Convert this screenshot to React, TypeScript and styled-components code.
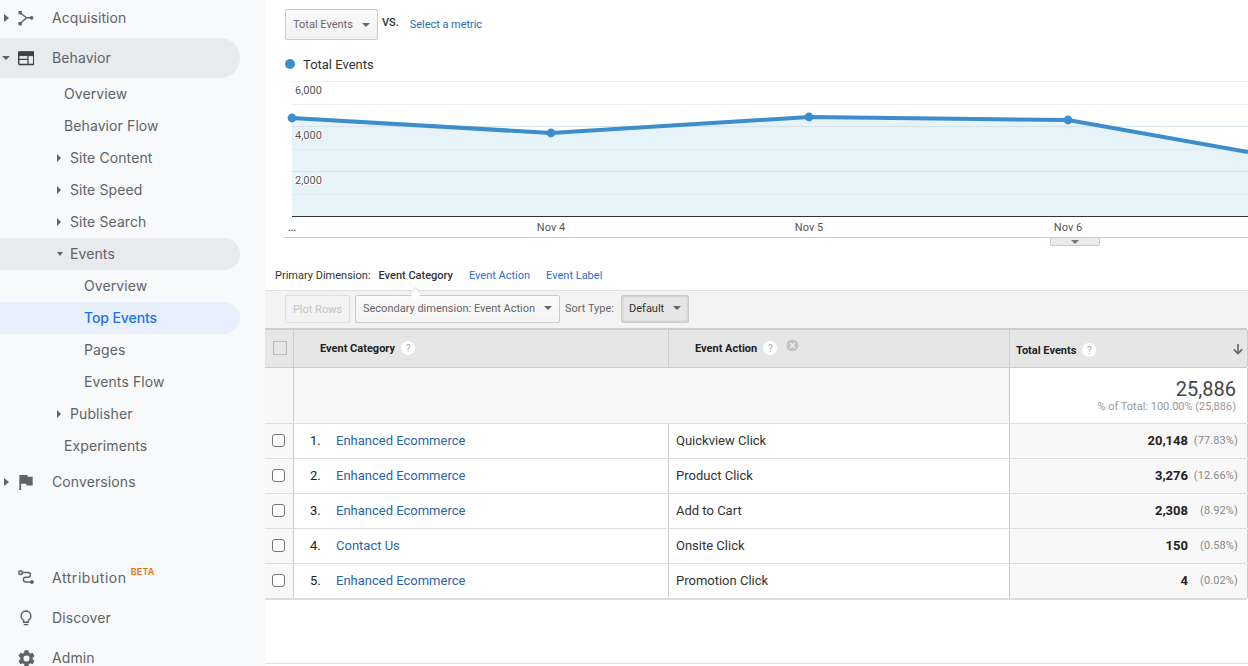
import React from "react";
import styled, { createGlobalStyle } from "styled-components";

const Global = createGlobalStyle`
  html, body { margin: 0; padding: 0; height: 100%; overflow: hidden; background: #fff; }
  body { font-family: Roboto, "Liberation Sans", sans-serif; }
  #root { height: 100%; }
`;

const Page = styled.div`
  display: flex;
  width: 1248px;
  height: 666px;
  overflow: hidden;
`;

const Sidebar = styled.nav`
  width: 265px;
  flex: none;
  background: #f8f9fa;
  display: flex;
  flex-direction: column;
  overflow: hidden;
`;

const NavList = styled.div`
  display: flex;
  flex-direction: column;
  margin-top: -2px;
  width: 240px;
`;

const FooterList = styled(NavList)`
  margin-top: 56px;
`;

const TopRow = styled.div<{ $active?: boolean }>`
  height: 40px;
  flex: none;
  display: flex;
  align-items: center;
  border-radius: ${(p) => (p.$active ? "0 20px 20px 0" : "0")};
  background: ${(p) => (p.$active ? "#e8eaed" : "transparent")};
  font-family: Inter, Roboto, sans-serif;
  font-size: 14px;
  color: #5f6368;
`;

const NavText = styled.span<{ $spacing?: number }>`
  margin-top: -2px;
  letter-spacing: ${(p) => p.$spacing ?? 0.1}px;
`;

const CaretSlot = styled.span`
  width: 18px;
  flex: none;
  display: flex;
  justify-content: center;
  padding-right: 6px;
  box-sizing: border-box;
`;

const Caret = styled.span<{ $open?: boolean; $small?: boolean; $wide?: boolean }>`
  width: 0;
  height: 0;
  border-style: solid;
  border-color: transparent;
  ${(p) =>
    p.$open
      ? `border-width: 4px ${p.$wide ? "4px" : "3.5px"} 0; border-top-color: #5f6368;`
      : `border-width: ${p.$small ? "4px 0 4px 4px" : "4px 0 4px 5px"}; border-left-color: #5f6368;`}
`;

const IconSlot = styled.span`
  width: 34px;
  flex: none;
  display: flex;
  align-items: center;
`;

const Beta = styled.span`
  align-self: flex-start;
  margin: 8px 0 0 4px;
  font-family: Inter, Roboto, sans-serif;
  font-size: 9px;
  line-height: 11px;
  font-weight: 600;
  color: #e8710a;
  letter-spacing: 0.2px;
`;

const SubRow = styled.div<{ $indent: number; $active?: boolean; $current?: boolean }>`
  height: 32px;
  flex: none;
  display: flex;
  align-items: center;
  padding-left: ${(p) => p.$indent}px;
  border-radius: ${(p) => (p.$active || p.$current ? "0 16px 16px 0" : "0")};
  background: ${(p) => (p.$current ? "#e8f0fe" : p.$active ? "#e8eaed" : "transparent")};
  font-family: Inter, Roboto, sans-serif;
  font-size: 14px;
  font-weight: ${(p) => (p.$current ? 500 : 400)};
  color: ${(p) => (p.$current ? "#1a73e8" : "#5f6368")};
`;

const SubCaret = styled.span`
  width: 13px;
  flex: none;
  display: flex;
`;

const Main = styled.main`
  flex: 1;
  min-width: 0;
  display: flex;
  flex-direction: column;
  position: relative;
`;

const MetricBar = styled.div`
  display: flex;
  align-items: center;
  padding: 9px 0 0 20px;
  height: 31px;
`;

const MetricSelect = styled.div`
  width: 93px;
  height: 31px;
  box-sizing: border-box;
  border: 1px solid #ccc;
  border-radius: 2px;
  background: linear-gradient(#fbfbfb, #f1f1f1);
  display: flex;
  align-items: center;
  justify-content: space-between;
  padding: 0 7px;
  font-size: 11px;
  color: #666;
`;

const Vs = styled.span`
  margin: -4px 0 0 4px;
  font-size: 11px;
  font-weight: 500;
  color: #333;
`;

const MetricLink = styled.a`
  margin-left: 11px;
  font-size: 11px;
  letter-spacing: -0.05px;
  color: #2a6bb0;
`;

const DownArrow = styled.span<{ $color?: string }>`
  flex: none;
  width: 0;
  height: 0;
  border-style: solid;
  border-width: 4px 4px 0 4px;
  border-color: ${(p) => p.$color || "#666"} transparent transparent transparent;
`;

const Legend = styled.div`
  display: flex;
  align-items: center;
  gap: 8px;
  margin: 16px 0 0 20px;
  height: 16px;
  font-size: 13px;
  color: #333;
`;

const LegendDot = styled.span`
  width: 10px;
  height: 10px;
  border-radius: 50%;
  background: #3b8ecb;
`;

const ChartWrap = styled.div`
  margin: 9px 0 0 19px;
  height: 156px;
  border-bottom: 1px solid #ccc;
  position: relative;
`;

const ChartSvg = styled.svg`
  display: block;
  width: 964px;
  height: 156px;
  font-family: Roboto, sans-serif;
`;

const ChartHandle = styled.div`
  position: absolute;
  left: 766px;
  bottom: -9px;
  width: 50px;
  height: 8px;
  box-sizing: border-box;
  background: #eaeaea;
  border: 1px solid #ccc;
  border-top: none;
  border-radius: 0 0 2px 2px;
  display: flex;
  justify-content: center;
  align-items: center;
`;

const DimensionBar = styled.div`
  display: flex;
  align-items: center;
  height: 53px;
  padding: 23px 0 1px 10px;
  box-sizing: border-box;
  font-size: 11px;
  color: #333;
  border-bottom: 1px solid #e0e0e0;
  position: relative;
`;

const DimLabel = styled.span`
  margin-right: 8px;
`;

const DimCurrent = styled.span`
  font-weight: 500;
  margin-right: 16px;
  color: #333;
  position: relative;
  &::after {
    content: "";
    position: absolute;
    left: 32px;
    top: 20px;
    width: 8px;
    height: 8px;
    background: #fff;
    border-left: 1px solid #ddd;
    border-top: 1px solid #ddd;
    transform: rotate(45deg);
  }
`;

const DimLink = styled.a`
  margin-right: 16px;
  color: #2a6dd6;
`;

const Toolbar = styled.div`
  height: 37px;
  background: #f3f3f3;
  display: flex;
  align-items: center;
  padding: 0 0 1px 20px;
  box-sizing: border-box;
  font-size: 11px;
  color: #666;
`;

const PlotButton = styled.div`
  width: 65px;
  height: 28px;
  box-sizing: border-box;
  border: 1px solid #e0e0e0;
  border-radius: 2px;
  display: flex;
  align-items: center;
  justify-content: center;
  color: #c4c4c4;
  margin-right: 5px;
`;

const ToolSelect = styled.div<{ $pressed?: boolean }>`
  height: 28px;
  width: ${(p) => (p.$pressed ? "68px" : "205px")};
  box-sizing: border-box;
  border: 1px solid #ccc;
  border-radius: 2px;
  background: ${(p) => (p.$pressed ? "#e6e6e6" : "linear-gradient(#fbfbfb,#f3f3f3)")};
  box-shadow: ${(p) => (p.$pressed ? "inset 0 0 3px rgba(0,0,0,.2)" : "none")};
  display: flex;
  align-items: center;
  justify-content: space-between;
  padding: 0 7px 2px;
  color: ${(p) => (p.$pressed ? "#333" : "#666")};
`;

const SortLabel = styled.span`
  width: 49px;
  margin: -2px 7px 0 5px;
  white-space: nowrap;
`;

const Table = styled.div`
  display: flex;
  flex-direction: column;
  font-size: 13px;
  color: #333;
  width: 982px;
  border-bottom: 1px solid #ddd;
`;

const Row = styled.div<{ $h: number; $head?: boolean }>`
  display: grid;
  grid-template-columns: 29px 375px 341px 238px;
  height: ${(p) => p.$h}px;
  box-sizing: border-box;
  background: ${(p) => (p.$head ? "#e6e6e6" : "#fff")};
  border-top: ${(p) => (p.$head ? "2px solid #ccc" : "none")};
  border-bottom: 1px solid ${(p) => (p.$head ? "#ccc" : "#ddd")};
`;

const Cell = styled.div<{ $shade?: boolean; $span?: number }>`
  display: flex;
  align-items: center;
  box-sizing: border-box;
  padding-bottom: 1px;
  border-right: 1px solid #ccc;
  background: ${(p) => (p.$shade ? "#f8f8f8" : "transparent")};
  grid-column: ${(p) => (p.$span ? `span ${p.$span}` : "auto")};
  min-width: 0;
`;

const CheckCell = styled(Cell)`
  padding: 0 0 2px 7px;
`;

const HeadCheck = styled.span`
  width: 12px;
  height: 12px;
  margin-left: 1px;
  border: 1px solid #bbb;
  background: #e6e6e6;
`;

const RowCheck = styled.span`
  width: 11px;
  height: 11px;
  border: 1px solid #767676;
  border-radius: 3px;
  background: #fff;
`;

const HeadCell = styled(Cell)<{ $pad: number; $low?: boolean }>`
  padding-left: ${(p) => p.$pad}px;
  padding-top: ${(p) => (p.$low ? 4 : 0)}px;
  font-size: 11px;
  font-weight: 700;
  color: #222;
`;

const Help = styled.span`
  width: 14px;
  height: 14px;
  border-radius: 50%;
  background: #fff;
  color: #aaa;
  font-size: 10px;
  font-weight: 400;
  display: inline-flex;
  align-items: center;
  justify-content: center;
  margin-left: 6px;
`;

const RemoveIcon = styled.svg`
  width: 13px;
  height: 13px;
  margin: -6px 0 0 9px;
`;

const SortArrow = styled.svg`
  width: 12px;
  height: 12px;
  margin: -3px 3px 0 auto;
`;

const SummaryCell = styled(Cell)`
  flex-direction: column;
  align-items: flex-end;
  justify-content: center;
  padding-right: 11px;
`;

const SummaryValue = styled.div`
  font-size: 20px;
  line-height: 22px;
  color: #444;
`;

const SummaryNote = styled.div`
  font-size: 11px;
  line-height: 13px;
  color: #999;
`;

const DataCell = styled(Cell)`
  padding-left: 7px;
`;

const RankCell = styled(Cell)`
  padding-left: 16px;
`;

const Rank = styled.span`
  width: 26px;
  flex: none;
  color: #222;
`;

const RowLink = styled.a`
  color: #2a66a6;
`;

const ValueCell = styled(Cell)`
  justify-content: flex-end;
  padding-right: 9px;
`;

const Value = styled.b`
  font-weight: 700;
  color: #222;
`;

const Percent = styled.span`
  width: 50px;
  text-align: right;
  font-size: 11px;
  letter-spacing: 0.12px;
  color: #888;
`;

const TailRule = styled.div`
  position: absolute;
  left: 0;
  right: 0;
  bottom: 2px;
  border-bottom: 1px solid #e0e0e0;
`;

const ico = { width: 16, height: 16, viewBox: "0 0 16 16" };

const AcquisitionIcon = () => (
  <svg {...ico} fill="#5f6368" stroke="none">
    <rect x="0.5" y="1" width="3.4" height="3.4" />
    <rect x="0.5" y="12" width="3.4" height="3.4" />
    <circle cx="13.6" cy="7.8" r="1.9" />
    <path d="M2 2.7 L8.5 7.8 L2 13.7 M8.5 7.8 H12" fill="none" stroke="#5f6368" strokeWidth="1.4" />
  </svg>
);

const BehaviorIcon = () => (
  <svg {...ico} fill="none" stroke="#3c4043">
    <rect x="0.7" y="2" width="15" height="12.5" rx="1.2" strokeWidth="1.4" />
    <rect x="0.7" y="2" width="15" height="3.6" fill="#3c4043" strokeWidth="1" />
    <path d="M1 9.4 H10 V14 M10 5.6 V14" strokeWidth="1.2" />
  </svg>
);

const FlagIcon = () => (
  <svg width="16" height="16" viewBox="4 3 17 18" fill="#5f6368">
    <path d="M14.4 6 14 4H5v17h2v-7h5.6l.4 2h7V6z" />
  </svg>
);

const AttributionIcon = () => (
  <svg {...ico} fill="none" stroke="#5f6368" strokeWidth="1.5">
    <circle cx="2.6" cy="2.6" r="1.8" />
    <path d="M4.4 2.6 H10 Q12.4 2.6 12.4 4.9 Q12.4 7.2 10 7.2 H7.5 Q5.4 7.2 5.4 9.6 Q5.4 12 7.5 12 H13" />
    <circle cx="14" cy="12" r="1.9" fill="#5f6368" stroke="none" />
  </svg>
);

const BulbIcon = () => (
  <svg {...ico} fill="none" stroke="#5f6368" strokeWidth="1.4">
    <path d="M8 1 A5 5 0 0 0 5.6 10.3 V12.2 H10.4 V10.3 A5 5 0 0 0 8 1 Z" />
    <path d="M5.8 14.6 H10.2" />
  </svg>
);

const GearIcon = () => (
  <svg width="17" height="17" viewBox="2 2 20 20" fill="#5f6368">
    <path d="M19.14 12.94c.04-.3.06-.61.06-.94 0-.32-.02-.64-.07-.94l2.03-1.58a.49.49 0 0 0 .12-.61l-1.92-3.32a.49.49 0 0 0-.59-.22l-2.39.96c-.5-.38-1.03-.7-1.62-.94l-.36-2.54a.48.48 0 0 0-.48-.41h-3.84a.47.47 0 0 0-.47.41l-.36 2.54c-.59.24-1.13.57-1.62.94l-2.39-.96a.48.48 0 0 0-.59.22L2.74 8.87c-.12.21-.08.47.12.61l2.03 1.58c-.05.3-.09.63-.09.94s.02.64.07.94l-2.03 1.58a.49.49 0 0 0-.12.61l1.92 3.32c.12.22.37.29.59.22l2.39-.96c.5.38 1.03.7 1.62.94l.36 2.54c.05.24.24.41.48.41h3.84c.24 0 .44-.17.47-.41l.36-2.54c.59-.24 1.13-.56 1.62-.94l2.39.96c.22.08.47 0 .59-.22l1.92-3.32a.47.47 0 0 0-.12-.61l-2.01-1.58zM12 15.6A3.6 3.6 0 1 1 12 8.4a3.6 3.6 0 0 1 0 7.2z" />
  </svg>
);

const Top = ({
  label,
  icon,
  caret,
  active,
  spacing,
  children,
}: {
  label: string;
  icon: React.ReactNode;
  caret?: "open" | "closed";
  active?: boolean;
  spacing?: number;
  children?: React.ReactNode;
}) => (
  <TopRow $active={active}>
    <CaretSlot>{caret && <Caret $open={caret === "open"} $wide />}</CaretSlot>
    <IconSlot>{icon}</IconSlot>
    <NavText $spacing={spacing}>{label}</NavText>
    {children}
  </TopRow>
);

const Leaf = ({ label, indent, current }: { label: string; indent: number; current?: boolean }) => (
  <SubRow $indent={indent} $current={current}>
    <NavText $spacing={current ? -0.1 : 0.1}>{label}</NavText>
  </SubRow>
);

const Branch = ({ label, open, active }: { label: string; open?: boolean; active?: boolean }) => (
  <SubRow $indent={57} $active={active}>
    <SubCaret>
      <Caret $open={open} $small={!open} />
    </SubCaret>
    <NavText>{label}</NavText>
  </SubRow>
);

const Chart = () => {
  const line = "M8 37 L267 52 L525 36 L784 39 L964 71";
  return (
    <ChartSvg viewBox="0 0 964 156">
      <path d={`${line} V135 H8 Z`} fill="#e6f3f9" />
      <path d="M8 0.5 H964 M8 23.5 H964" stroke="#f0f0f0" />
      {[45.5, 68.5, 90.5, 113.5].map((y, i) => (
        <path key={y} d={`M8 ${y} H964`} stroke={i % 2 === 0 ? "#d6e2e9" : "#e0ebf1"} />
      ))}
      <path d="M8 135.5 H964" stroke="#333" />
      <path d={line} fill="none" stroke="#3b8ecb" strokeWidth="4" />
      {[[8, 37], [267, 52], [525, 36], [784, 39]].map(([x, y]) => (
        <circle key={x} cx={x} cy={y} r="4.4" fill="#3b8ecb" />
      ))}
      <g fontSize="11" fill="#555" stroke="#fff" strokeWidth="2" paintOrder="stroke">
        <text x="11" y="13">6,000</text>
        <text x="11" y="58">4,000</text>
        <text x="11" y="103">2,000</text>
      </g>
      <g fontSize="11" fill="#555" textAnchor="middle">
        <text x="8" y="150" fontSize="13">…</text>
        <text x="267" y="150">Nov 4</text>
        <text x="525" y="150">Nov 5</text>
        <text x="784" y="150">Nov 6</text>
      </g>
    </ChartSvg>
  );
};

const rows = [
  { n: "1.", cat: "Enhanced Ecommerce", act: "Quickview Click", val: "20,148", pct: "(77.83%)" },
  { n: "2.", cat: "Enhanced Ecommerce", act: "Product Click", val: "3,276", pct: "(12.66%)" },
  { n: "3.", cat: "Enhanced Ecommerce", act: "Add to Cart", val: "2,308", pct: "(8.92%)" },
  { n: "4.", cat: "Contact Us", act: "Onsite Click", val: "150", pct: "(0.58%)" },
  { n: "5.", cat: "Enhanced Ecommerce", act: "Promotion Click", val: "4", pct: "(0.02%)" },
];

export default function App() {
  return (
    <Page>
      <Global />
      <Sidebar>
        <NavList>
          <Top label="Acquisition" icon={<AcquisitionIcon />} caret="closed" />
          <Top label="Behavior" icon={<BehaviorIcon />} caret="open" active />
          <Leaf indent={64} label="Overview" />
          <Leaf indent={64} label="Behavior Flow" />
          <Branch label="Site Content" />
          <Branch label="Site Speed" />
          <Branch label="Site Search" />
          <Branch label="Events" open active />
          <Leaf indent={84} label="Overview" />
          <Leaf indent={84} label="Top Events" current />
          <Leaf indent={84} label="Pages" />
          <Leaf indent={84} label="Events Flow" />
          <Branch label="Publisher" />
          <Leaf indent={64} label="Experiments" />
          <Top label="Conversions" icon={<FlagIcon />} caret="closed" />
        </NavList>
        <FooterList>
          <Top label="Attribution" icon={<AttributionIcon />} spacing={0.55}>
            <Beta>BETA</Beta>
          </Top>
          <Top label="Discover" icon={<BulbIcon />} />
          <Top label="Admin" icon={<GearIcon />} />
        </FooterList>
      </Sidebar>
      <Main>
        <MetricBar>
          <MetricSelect>
            Total Events
            <DownArrow />
          </MetricSelect>
          <Vs>VS.</Vs>
          <MetricLink>Select a metric</MetricLink>
        </MetricBar>
        <Legend>
          <LegendDot />
          Total Events
        </Legend>
        <ChartWrap>
          <Chart />
          <ChartHandle>
            <DownArrow $color="#777" />
          </ChartHandle>
        </ChartWrap>
        <DimensionBar>
          <DimLabel>Primary Dimension:</DimLabel>
          <DimCurrent>Event Category</DimCurrent>
          <DimLink>Event Action</DimLink>
          <DimLink>Event Label</DimLink>
        </DimensionBar>
        <Toolbar>
          <PlotButton>Plot Rows</PlotButton>
          <ToolSelect>
            Secondary dimension: Event Action
            <DownArrow />
          </ToolSelect>
          <SortLabel>Sort Type:</SortLabel>
          <ToolSelect $pressed>
            Default
            <DownArrow />
          </ToolSelect>
        </Toolbar>
        <Table>
          <Row $h={40} $head>
            <CheckCell>
              <HeadCheck />
            </CheckCell>
            <HeadCell $pad={26}>
              Event Category<Help>?</Help>
            </HeadCell>
            <HeadCell $pad={26}>
              Event Action<Help>?</Help>
              <RemoveIcon viewBox="0 0 13 13">
                <circle cx="6.5" cy="6.5" r="6" fill="#c4c4c4" />
                <path d="M4 4 L9 9 M9 4 L4 9" stroke="#eee" strokeWidth="1.2" />
              </RemoveIcon>
            </HeadCell>
            <HeadCell $pad={6} $low>
              Total Events<Help>?</Help>
              <SortArrow viewBox="0 0 12 12">
                <path d="M6 1 V10.5 M1.8 6.4 L6 10.6 L10.2 6.4" fill="none" stroke="#666" strokeWidth="1.6" />
              </SortArrow>
            </HeadCell>
          </Row>
          <Row $h={56}>
            <Cell $shade />
            <Cell $shade $span={2} />
            <SummaryCell>
              <SummaryValue>25,886</SummaryValue>
              <SummaryNote>% of Total: 100.00% (25,886)</SummaryNote>
            </SummaryCell>
          </Row>
          {rows.map((r) => (
            <Row $h={35} key={r.n}>
              <CheckCell $shade>
                <RowCheck />
              </CheckCell>
              <RankCell>
                <Rank>{r.n}</Rank>
                <RowLink>{r.cat}</RowLink>
              </RankCell>
              <DataCell>{r.act}</DataCell>
              <ValueCell $shade>
                <Value>{r.val}</Value>
                <Percent>{r.pct}</Percent>
              </ValueCell>
            </Row>
          ))}
        </Table>
        <TailRule />
      </Main>
    </Page>
  );
}
